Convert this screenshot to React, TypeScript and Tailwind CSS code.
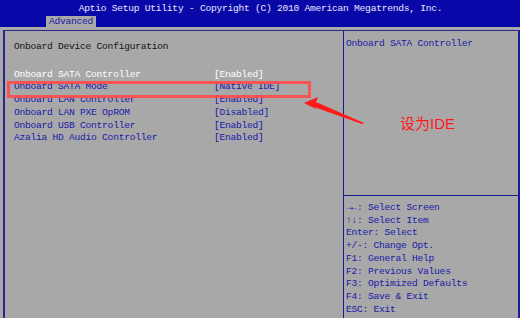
const rows = [
  { label: 'Onboard SATA Controller', value: '[Enabled]', active: true },
  { label: 'Onboard SATA Mode', value: '[Native IDE]' },
  { label: 'Onboard LAN Controller', value: '[Enabled]' },
  { label: 'Onboard LAN PXE OpROM', value: '[Disabled]' },
  { label: 'Onboard USB Controller', value: '[Enabled]' },
  { label: 'Azalia HD Audio Controller', value: '[Enabled]' },
];

const help = [
  '→←: Select Screen',
  '↑↓: Select Item',
  'Enter: Select',
  '+/-: Change Opt.',
  'F1: General Help',
  'F2: Previous Values',
  'F3: Optimized Defaults',
  'F4: Save & Exit',
  'ESC: Exit',
];

export default function App() {
  return (
    <div
      className="relative w-[520px] h-[318px] overflow-hidden bg-[#a8a8a8] text-[9.6px] leading-[12.7px] tracking-[-0.25px]"
      style={{ fontFamily: '"Liberation Mono", "DejaVu Sans Mono", monospace' }}
    >
      {/* Header */}
      <div className="h-[27px] bg-[#0808a8] flex flex-col">
        <div className="h-[16px] pt-[3px] flex justify-center text-[#e8e8ff] pl-[1px]">
          Aptio Setup Utility - Copyright (C) 2010 American Megatrends, Inc.
        </div>
        <div className="flex-1 flex pl-[46px]">
          <div className="w-[50px] bg-[#a8a8a8] text-[#1818a8] pl-[3px] flex items-center">Advanced</div>
        </div>
      </div>

      {/* Body */}
      <div className="pl-[3px] pt-[3px] h-[291px]">
        <div className="flex h-full border-t border-l-2 border-[#28288c]">
          {/* Left panel */}
          <div className="w-[338px] pl-[9px] pt-[10px]">
            <div className="text-[#141414]">Onboard Device Configuration</div>
            <div className="mt-[15px]">
              {rows.map((r) => (
                <div
                  key={r.label}
                  className={`flex ${r.active ? 'text-white' : 'text-[#1818a8]'}`}
                >
                  <span className="w-[200px]">{r.label}</span>
                  <span>{r.value}</span>
                </div>
              ))}
            </div>
          </div>

          {/* Right panel */}
          <div className="flex-1 flex flex-col border-l border-r-2 border-[#1a1a96]">
            <div className="h-[164px] pl-[2px] pt-[7px] text-[#1818a8]">Onboard SATA Controller</div>
            <div className="border-t border-[#1a1a96] pl-[2px] pt-[6px] text-[#1818a8]">
              {help.map((h) => (
                <div key={h}>{h}</div>
              ))}
            </div>
          </div>
        </div>
      </div>

      {/* Annotation overlay */}
      <div className="absolute left-[7px] top-[81px] w-[304px] h-[17px] border-[3px] border-[#ff4a4a]/90" />
      <svg className="absolute left-0 top-0" width="520" height="318">
        <polygon points="304,103 318,97 316,102 364,123 362,124 314,107 318,110" fill="#ff1a1a" />
      </svg>
      <div
        className="absolute left-[400px] top-[115px] text-[15px] leading-[18px] tracking-normal text-[#ff1a1a]"
        style={{ fontFamily: '"Liberation Sans", "Noto Sans CJK SC", sans-serif' }}
      >
        设为IDE
      </div>
    </div>
  );
}
